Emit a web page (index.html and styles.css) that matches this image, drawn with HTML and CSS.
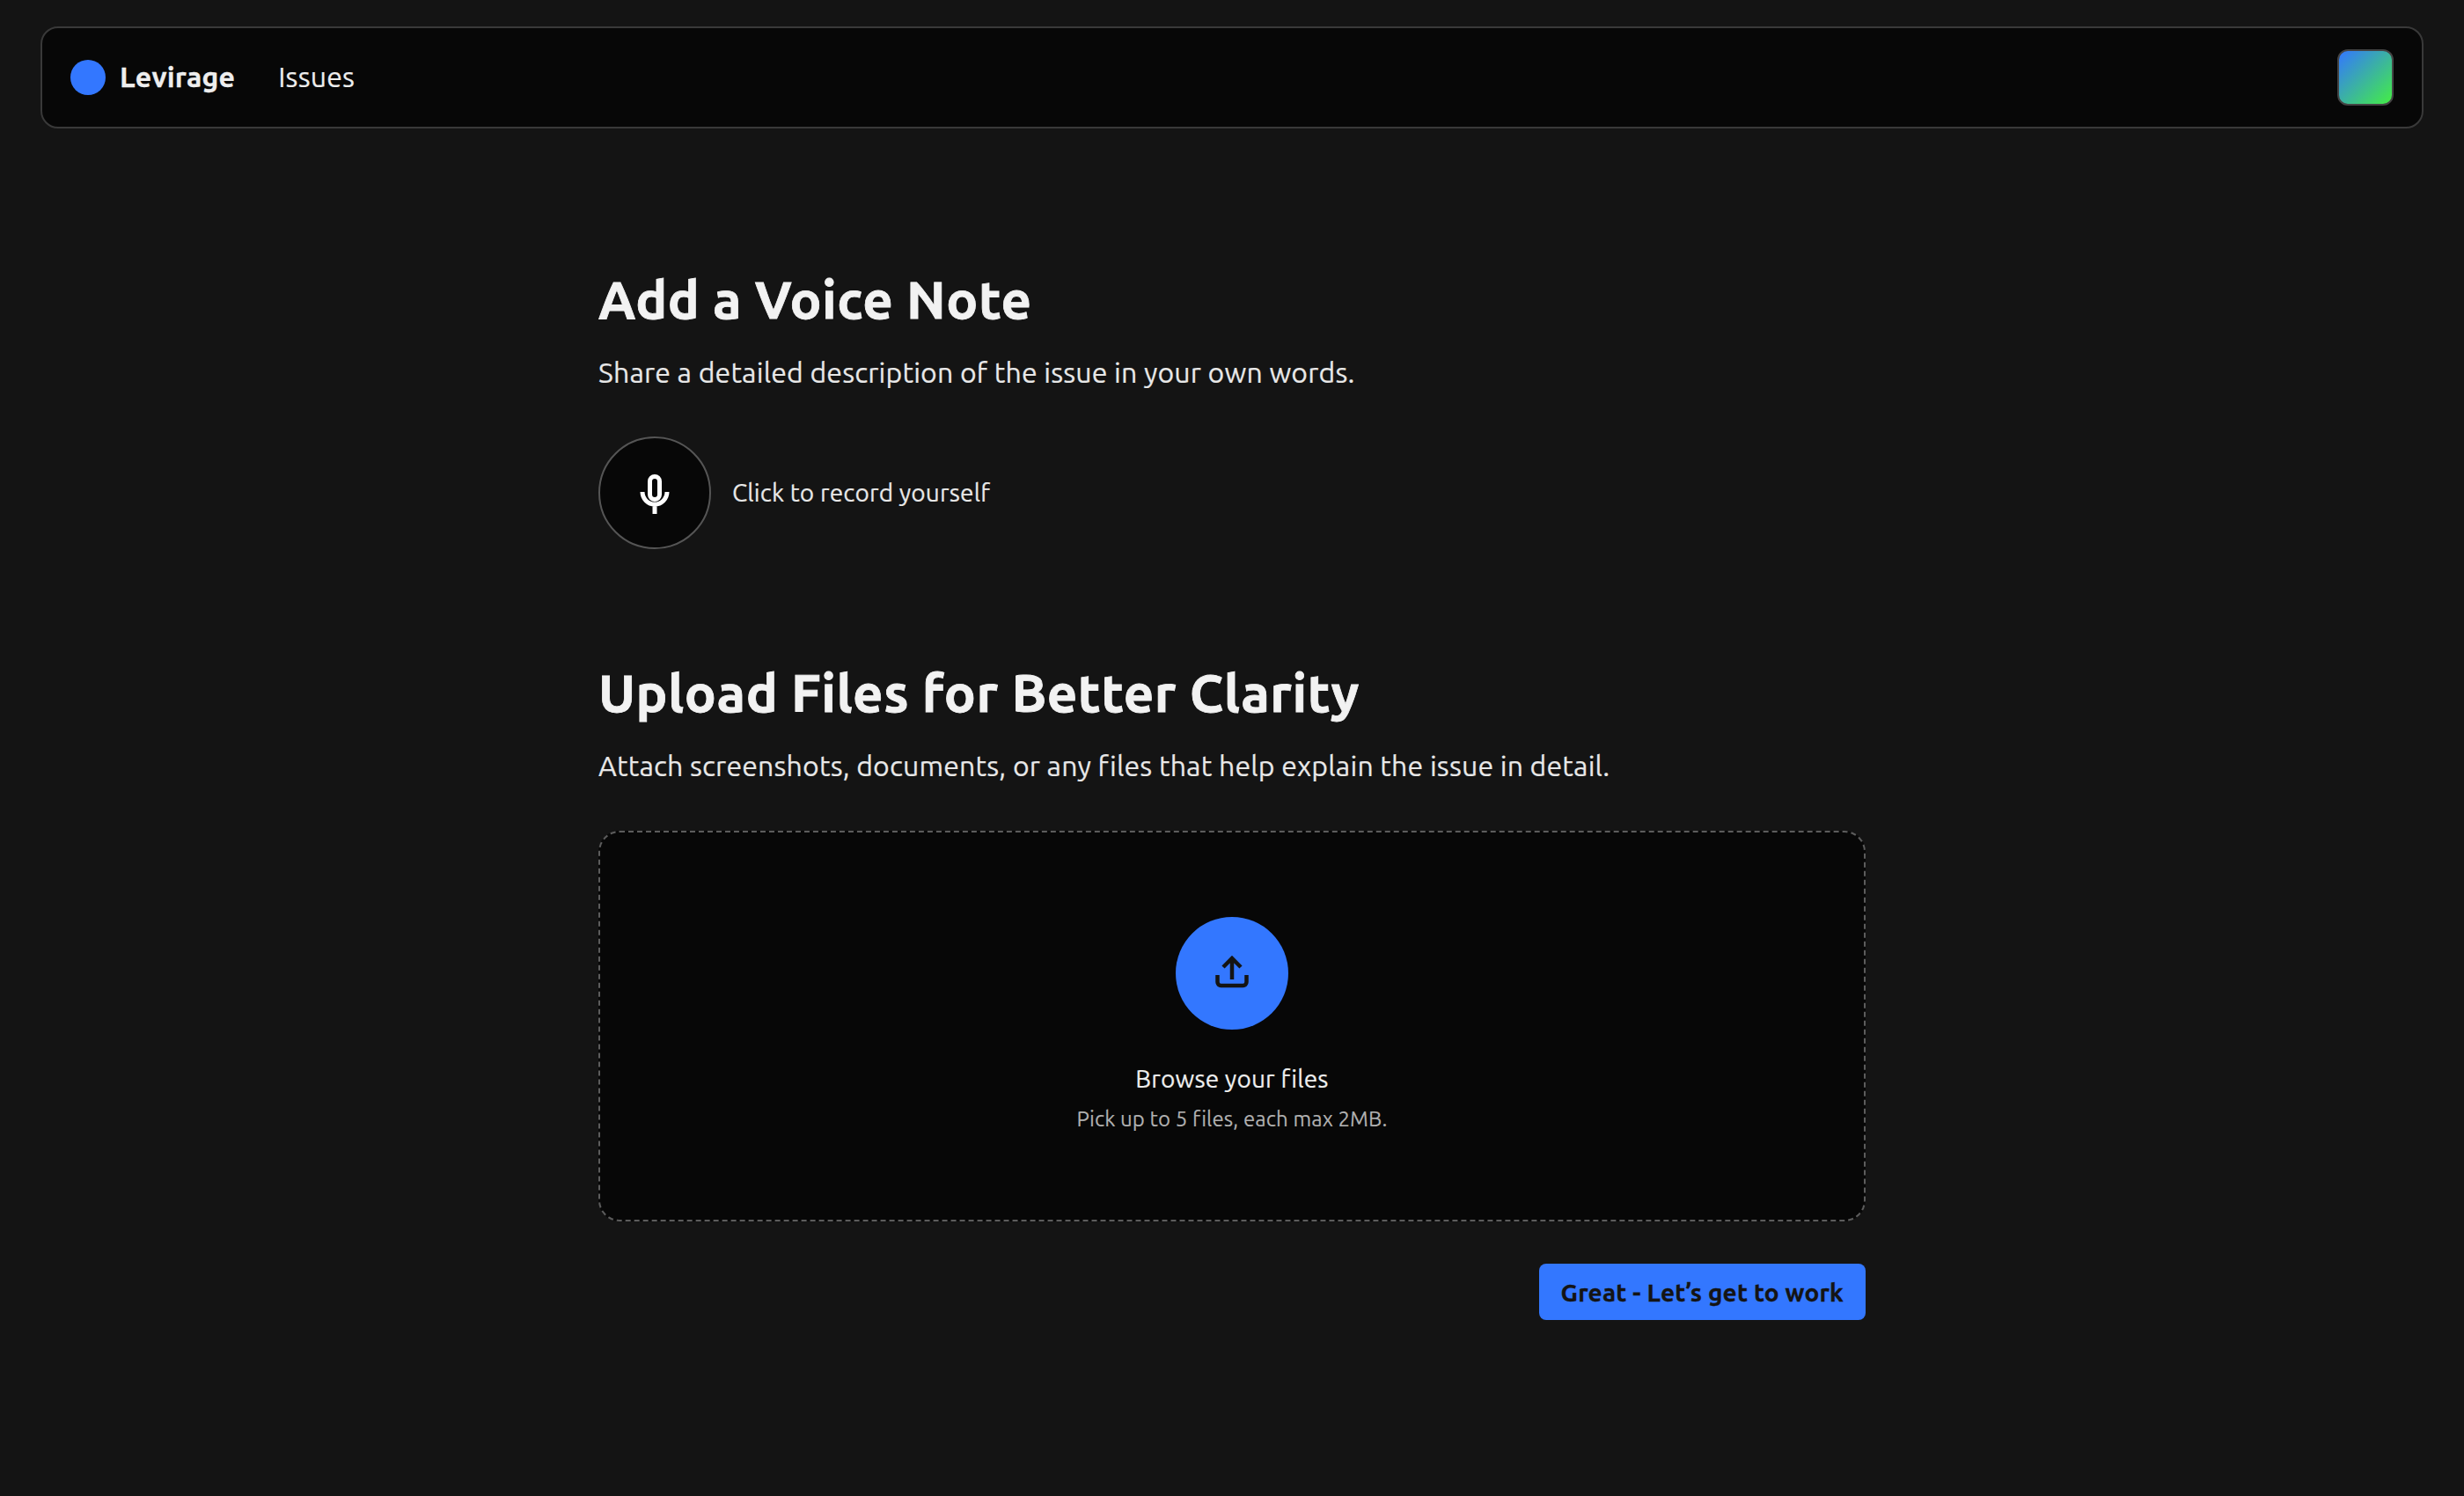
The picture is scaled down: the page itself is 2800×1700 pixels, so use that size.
FILE: index.html
```html
<!DOCTYPE html>
<html lang="en">
<head>
<meta charset="utf-8">
<title>Levirage</title>
<link rel="stylesheet" href="styles.css">
</head>
<body>
<header class="navbar">
  <div class="brand"><span class="brand-dot"></span><span class="brand-name">Levirage</span></div>
  <a class="nav-link">Issues</a>
  <div class="avatar"></div>
</header>
<main class="content">
  <section class="voice">
    <h1>Add a Voice Note</h1>
    <p class="lead">Share a detailed description of the issue in your own words.</p>
    <div class="record">
      <button class="mic-btn">
        <svg viewBox="0 0 48 48" width="48" height="48" fill="none" stroke="currentColor" stroke-width="5"><rect x="18.500" y="5.500" width="11" height="26" rx="5.500"/><path d="M10 23a14 14 0 0 0 28 0M24 37v11"/></svg>
      </button>
      <span class="record-label">Click to record yourself</span>
    </div>
  </section>
  <section class="upload">
    <h1>Upload Files for Better Clarity</h1>
    <p class="lead">Attach screenshots, documents, or any files that help explain the issue in detail.</p>
    <div class="dropzone">
      <div class="upload-circle">
        <svg viewBox="0 0 48 48" width="48" height="48" fill="none" stroke="currentColor" stroke-width="4.500"><path d="M24 31V8M14 17l10-10 10 10M7.500 26v8a4 4 0 0 0 4 4h25a4 4 0 0 0 4-4v-8"/></svg>
      </div>
      <div class="browse">Browse your files</div>
      <div class="hint">Pick up to 5 files, each max 2MB.</div>
    </div>
    <div class="actions"><button class="cta">Great - Let’s get to work</button></div>
  </section>
</main>
</body>
</html>
```
FILE: styles.css
```css
* { box-sizing: border-box; }
html, body { margin: 0; padding: 0; }
body { background: #141414; color: #f2f2f2; font-family: Ubuntu, "Noto Sans", "Open Sans", sans-serif; min-height: 1700px; padding: 30px 46px 0; }
.navbar { height: 116px; background: #070707; border: 2px solid #393939; border-radius: 20px; display: flex; align-items: center; padding: 0 32px; }
.brand { display: flex; align-items: center; gap: 16px; }
.brand-dot { width: 40px; height: 40px; border-radius: 50%; background: #3377ff; }
.brand-name { font-size: 32px; line-height: 36px; padding-bottom: 3px; font-weight: 700; letter-spacing: 0.2px; color: #eee; -webkit-text-stroke: 0.3px #eee; }
.nav-link { font-size: 32px; line-height: 36px; padding-bottom: 3px; margin-left: 49px; letter-spacing: 0.2px; color: #eee; -webkit-text-stroke: 0.2px #eee; }
.avatar { margin-left: auto; width: 64px; height: 64px; border-radius: 12px; border: 2px solid #444; background: linear-gradient(135deg, #3377ff, #44ee44); }
.content { width: 1440px; margin: 0 auto; padding-top: 159px; }
h1 { margin: 0; font-size: 60px; font-weight: 700; line-height: 70px; letter-spacing: 0.55px; -webkit-text-stroke: 0.8px #f2f2f2; }
.lead { margin: 24px 0 0; font-size: 32px; line-height: 48px; letter-spacing: 0.17px; color: #e8e8e8; -webkit-text-stroke: 0.2px #e8e8e8; }
.record { display: flex; align-items: center; gap: 24px; margin-top: 49px; }
.mic-btn { width: 128px; height: 128px; border-radius: 50%; background: #070707; border: 2px solid #555; color: #fff; display: flex; align-items: center; justify-content: center; padding: 0; }
.record-label { font-size: 28px; line-height: 36px; padding-bottom: 1px; letter-spacing: 0.15px; color: #e8e8e8; -webkit-text-stroke: 0.2px #e8e8e8; }
.upload { margin-top: 128px; }
.dropzone { margin-top: 50px; height: 444px; background: #070707; border: 2px dashed #5c5c5c; border-radius: 24px; display: flex; flex-direction: column; align-items: center; padding-top: 96px; }
.upload-circle { width: 128px; height: 128px; border-radius: 50%; background: #3377ff; color: #141414; display: flex; align-items: center; justify-content: center; }
.browse { font-size: 28px; margin-top: 36px; line-height: 40px; letter-spacing: 0.15px; color: #eee; -webkit-text-stroke: 0.2px #eee; }
.hint { font-size: 24px; color: #b0b0b0; margin-top: 8px; line-height: 36px; letter-spacing: 0.1px; -webkit-text-stroke: 0.15px #b0b0b0; }
.actions { display: flex; justify-content: flex-end; margin-top: 48px; }
.cta { height: 64px; padding: 0 25px; background: #3377ff; color: #141414; font-family: inherit; font-size: 28px; font-weight: 700; letter-spacing: 0.17px; border: 0; border-radius: 8px; -webkit-text-stroke: 0.3px #141414; }
```
